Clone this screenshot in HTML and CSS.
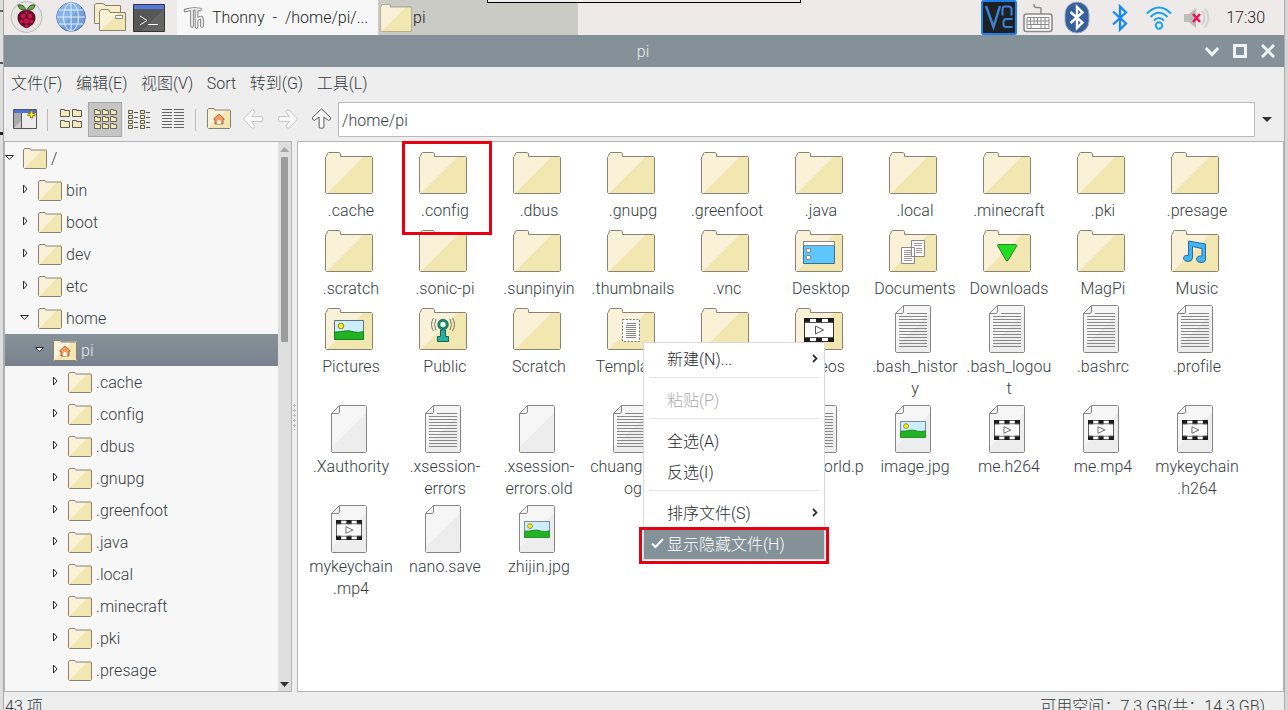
FILE: index.html
```html
<!DOCTYPE html>
<html lang="zh-CN">
<head>
<meta charset="utf-8">
<title>pi</title>
<link rel="stylesheet" href="styles.css">
</head>
<body>
<svg class="defs" aria-hidden="true">
  <defs>
    <clipPath id="fclip"><path d="M.5 8L3 3.5H14.5L16 7.5H46.5L47.500 8.500V43.500L46.500 44.500H1.500L.5 43.500Z"/></clipPath>
  </defs>
  <symbol id="folder" viewBox="0 0 48 48">
    <g clip-path="url(#fclip)"><path fill="#f9f1d8" d="M0 0H48V48H0Z"/><path fill="#f2e6b1" d="M1 45.500L39.500 7H48V45.500Z"/></g>
    <path fill="none" stroke="#888272" d="M1.500 44.500L.5 43.500V8L1.600 7 2.500 4.200 3.500 3.500H14.200L15.500 4.500V7.500H46.500L47.500 8.500V43.500L46.500 44.500Z"/>
  </symbol>
  <symbol id="folder-s" viewBox="0 0 24 24">
    <path fill="#f9f1d8" d="M.5 2.500L1.500 1H7L8 2.500H23.500V21.500H.5Z"/><path fill="#f2e6b1" d="M1 21.500L19.500 3H23.500V21.500Z"/>
    <path fill="none" stroke="#888272" d="M.5 20.500V3L1.500 1.500H7L7.700 2.500V3H22.500L23.500 3.500V20.500L22.500 21.500H1.500Z"/>
  </symbol>
  <symbol id="house" viewBox="0 0 12 12"><path fill="#ff9a5c" stroke="#7d5a48" stroke-width=".8" d="M.6 6L5.900 1 11.300 6 10 6.400V11H2V6.400Z"/><path fill="#fff" d="M4.200 11V8Q6 6 7.800 8V11Z"/></symbol>
  <symbol id="file" viewBox="0 0 48 48">
    <path fill="#f6f6f6" d="M15 .5H41.500V47.500H6.500V9Z"/><path fill="#ededed" d="M7 42L41 8V47H7Z"/>
    <path fill="none" stroke="#858585" d="M14.500 .5H40.500L41.500 1.500V46.500L40.500 47.500H7.500L6.500 46.500V8.500ZM14.500 .5V7L13.500 8.500H6.500"/>
  </symbol>
  <symbol id="text" viewBox="0 0 48 48"><use href="#file"/><path stroke="#888" d="M18 8.500H38M10 11.500H38M10 14.500H38M10 17.500H38M10 20.500H38M10 23.500H38M10 26.500H38M10 29.500H38M10 32.500H38M10 35.500H38M10 38.500H38M10 41.500H38"/></symbol>
  <symbol id="pic" viewBox="0 0 30 20" preserveAspectRatio="none"><path fill="#cdeefc" d="M.5.5H29.500V19.500H.5Z"/><path fill="#21b321" stroke="#17801b" d="M.5 12Q7 12 11 11 15 10 20 12 25 13 29.500 11.500V19.500H.5Z"/><path fill="none" stroke="#60727a" d="M.5 12V.5H29.500V12"/><circle cx="7" cy="6" r="2.800" fill="#ffee1c" stroke="#8d8617"/></symbol>
  <symbol id="film" viewBox="0 0 30 24" preserveAspectRatio="none"><rect x=".5" y=".5" width="29" height="23" rx="1" fill="#fff" stroke="#333"/><path fill="#1c1c1c" d="M0 0H6V5H0ZM12 0H18V5H12ZM24 0H30V5H24ZM0 19H6V24H0ZM12 19H18V24H12ZM24 19H30V24H24Z"/><path fill="none" stroke="#555" d="M1 4.500H29M1 19.500H29M11.500 8V16L19.500 12Z"/></symbol>
  <symbol id="image" viewBox="0 0 48 48"><use href="#file"/><use href="#pic" x="11" y="16" width="26" height="17"/></symbol>
  <symbol id="video" viewBox="0 0 48 48"><use href="#file"/><use href="#film" x="11" y="15" width="26" height="20"/></symbol>
  <symbol id="f-home" viewBox="0 0 24 24"><use href="#folder-s"/><use href="#house" x="6" y="6" width="12" height="12"/></symbol>
  <symbol id="f-desktop" viewBox="0 0 48 48"><use href="#folder"/><path fill="#5dc7fd" stroke="#386f8f" d="M8.500 14.500H39.500V36.500H8.500Z"/><path fill="#fff" stroke="#888" d="M8.500 14.500H39.500V18.500H8.500ZM11.500 21.500H15.500V25.500H11.500ZM11.500 28.500H15.500V32.500H11.500Z"/></symbol>
  <symbol id="f-docs" viewBox="0 0 48 48"><use href="#folder"/><path fill="#fff" stroke="#888" d="M22.500 13.500H35.500V29.500H22.500ZM12.500 20.500H25.500V36.500H12.500Z"/><path stroke="#999" d="M25 16.500H33M25 18.500H33M27 21.500H33M27 23.500H33M27 25.500H33M15 23.500H23M15 25.500H23M15 27.500H23M15 29.500H23M15 31.500H23M15 33.500H23"/></symbol>
  <symbol id="f-down" viewBox="0 0 48 48"><use href="#folder"/><path fill="#20de20" stroke="#3d7a32" d="M15 17.500H33L34 18.500 25 33.500 23.500 34 14.500 18.500Z"/></symbol>
  <symbol id="f-music" viewBox="0 0 48 48"><use href="#folder"/><path fill="#43b4fb" stroke="#2c6a96" d="M17.500 14L34.500 17V33Q34 35.500 30 35.500 25.500 35 25.500 32 26 28.500 31 29V21.500L21.500 19.500V31Q21 34.500 17 34.500 12.500 34 12.500 31 13 27.500 17.500 28.500Z"/></symbol>
  <symbol id="f-pics" viewBox="0 0 48 48"><use href="#folder"/><use href="#pic" x="9" y="15" width="30" height="20"/></symbol>
  <symbol id="f-video" viewBox="0 0 48 48"><use href="#folder"/><use href="#film" x="9" y="13" width="30" height="24"/></symbol>
  <symbol id="f-tmpl" viewBox="0 0 48 48"><use href="#folder"/><path fill="#fff" stroke="#777" stroke-dasharray="2 1.500" d="M15.500 14.500H32.500V36.500H15.500Z"/><path stroke="#888" d="M20 18.500H29M19 20.500H29M19 22.500H29M19 24.500H29M19 26.500H29M19 28.500H29M19 30.500H29M19 32.500H29"/></symbol>
  <symbol id="f-public" viewBox="0 0 48 48"><use href="#folder"/><path fill="#22b3a4" stroke="#1b5f5a" d="M21.500 25H26.500V31.500H29.500V36.500H18.500V31.500H21.500Z"/><circle cx="24" cy="19.500" r="4.200" fill="#e9f4fb" stroke="#1c8268" stroke-width="3"/><path fill="none" stroke="#6f7c68" d="M17 14Q14 19.500 17 25M14.500 13Q10.500 19.500 14.500 26M31 14Q34 19.500 31 25M33.500 13Q37.500 19.500 33.500 26"/></symbol>
  <symbol id="exp-r" viewBox="0 0 12 12"><path fill="#fff" stroke="#2a2a2a" d="M4.500 2L8 6 4.500 10Z"/></symbol>
  <symbol id="exp-d" viewBox="0 0 12 12"><path fill="#fff" stroke="#2a2a2a" d="M1.500 4.500H9.500L5.500 8.300Z"/></symbol>
  <symbol id="mini" viewBox="0 0 10 8"><path fill="#f4e9bc" stroke="#625c4b" d="M.5 7.500V.5H4.500V1.500H9.500V7.500Z"/></symbol>
  <symbol id="mini3" viewBox="0 0 7 6"><path fill="#f4e9bc" stroke="#6a6450" d="M.5 5.500V.5H3.500V1.500H6.500V5.500Z"/></symbol>
  <symbol id="arrow" viewBox="0 0 24 24"><path fill="#fafafa" stroke-linejoin="round" d="M1.500 12L10.500 2.500Q13 2 13.500 4.500L10 9.500H21Q22.500 12 21 14.500H10L13.500 19.500Q13 22 10.500 21.500Z"/></symbol>
</svg>

<div class="screen">
  <div class="behind"><i></i><b></b><u></u></div>
  <div class="desktop">
    <header class="taskbar">
      <div class="launchers">
        <svg class="rasp" width="33" height="34" viewBox="0 0 33 34"><circle cx="16.500" cy="17" r="15.500" fill="#e6e6e6" stroke="#bbb"/><g fill="#6aa544" stroke="#2d3f1d" stroke-width=".8"><path d="M16 10Q9 11 8 5 14 4 16 10Z"/><path d="M17 10Q24 11 25 5 19 4 17 10Z"/></g><path fill="#5e0e26" d="M16.500 10Q25 10 25.500 18 25 24 20 26.500 16.500 30 13 26.500 8 24 7.500 18 8 10 16.500 10Z"/><g fill="#c4164c"><circle cx="13" cy="16" r="2.500"/><circle cx="20" cy="16" r="2.500"/><circle cx="16.500" cy="21" r="2.800"/><circle cx="11.500" cy="21.500" r="1.900"/><circle cx="21.500" cy="21.500" r="1.900"/><circle cx="16.500" cy="26" r="1.800"/><circle cx="16.500" cy="12.500" r="1.500"/></g></svg>
        <svg class="globe" width="30" height="30" viewBox="0 0 30 30"><circle cx="15" cy="15" r="14.300" fill="#74a2dc" stroke="#50719c"/><path fill="#86b3ea" d="M5 25A14 14 0 0 1 25 5Z"/><path fill="none" stroke="#e8f0fa" d="M15 1V29M1 15H29M3 8H27M3 22H27"/><ellipse cx="15" cy="15" rx="7.500" ry="14" fill="none" stroke="#e8f0fa"/></svg>
        <svg class="fm" width="32" height="28" viewBox="0 0 32 28"><path fill="#f7edc9" stroke="#888272" d="M.5 20.500V2L2 .5H9.500L11 2.500H26.500V20.500Z"/><path fill="#f9f1d8" stroke="#888272" d="M5.500 27.500V8.500L7 6.500H14.500L16 9.500H31.500V27.500Z"/><path fill="#f2e6b1" d="M7 27L25 10H31V27Z"/><path fill="#fff" stroke="#888" d="M21.500 12.500H28.500V15.500H21.500Z"/></svg>
        <svg class="term" width="32" height="28" viewBox="0 0 32 28"><path fill="#565656" stroke="#333" d="M.5.5H31.500V27.500H.5Z"/><path fill="#646464" d="M8 27L30 6H31V27Z"/><path fill="#5577e0" d="M1 1H31V5H1Z"/><path fill="none" stroke="#fff" d="M7 12L14 16.500 7 21M15 20.500H25"/></svg>
      </div>
      <div class="task thonny"><svg width="22" height="24" viewBox="0 0 22 24"><g fill="none" stroke-linecap="round" stroke-linejoin="round"><path stroke="#777" stroke-width="3.600" d="M2.500 4.500Q9 2 17 3.500M9 4V20M13.500 4V21M13.500 14Q19 9 19 14V20"/><path stroke="#f2f2f2" stroke-width="1.800" d="M2.500 4.500Q9 2 17 3.500M9 4V20M13.500 4V21M13.500 14Q19 9 19 14V20"/></g></svg><span>Thonny - /home/pi/...</span></div>
      <div class="task active"><svg width="32" height="28" viewBox="0 3 48 42" preserveAspectRatio="none"><use href="#folder" width="48" height="48"/></svg><span>pi</span></div>
      <div class="tray">
        <svg width="36" height="35" viewBox="0 0 36 35"><rect x="1" y="1" width="34" height="33" rx="1.500" fill="#1d2125" stroke="#2080e8" stroke-width="2"/><g fill="none" stroke="#3d83d5" stroke-width="2"><path d="M5 6L12.500 27 19 6" stroke-width="2.400"/><path d="M21.500 15.500V9Q21.500 6.500 24 6.500H27.500Q30.500 6.500 30.500 9V15.500M31.500 19H25.500Q22.500 19 22.500 22V24.500Q22.500 27 25.500 27H31.500"/></g></svg>
        <svg class="kbd" width="30" height="30" viewBox="0 0 30 30"><g fill="none" stroke="#8a8a8a"><rect x="1" y="11" width="28" height="17.500" rx="2.500" fill="#fbfbfb" stroke-width="1.600"/><path stroke-width="1.500" d="M18 11V6Q18 4.500 16 4.500H13Q11 4.500 11 1"/><path d="M4 14.500H26V25.500H4ZM4 18H26M4 21.500H26M7.500 14.500V21.500M11 14.500V21.500M14.500 14.500V21.500M18 14.500V21.500M22 14.500V25.500M8 21.500V25.500M18 21.500V25.500"/></g></svg>
        <svg class="bt1" width="30" height="34" viewBox="0 0 30 34"><rect x="3" y="1" width="24" height="31" rx="12" fill="#365f9c" stroke="#9eb0cb"/><path fill="none" stroke="#fff" stroke-width="2.400" d="M8.500 11L20.500 21.500 15 27V6L20.500 11.500 8.500 22"/></svg>
        <svg class="bt2" width="18" height="28" viewBox="0 0 18 28"><path fill="none" stroke="#1389f8" stroke-width="2.300" d="M2 7.500L15 19.500 9 25.500V2.500L15 8.500 2 20.500"/></svg>
        <svg class="wifi" width="26" height="26" viewBox="0 0 26 26"><g fill="none" stroke="#1aa1ee" stroke-width="2"><circle cx="13" cy="20.500" r="3.200"/><path d="M1 8.500Q13-3.500 25 8.500M4.500 12Q13 3.500 21.500 12M8 15.500Q13 10.500 18 15.500"/></g></svg>
        <svg class="vol" width="28" height="22" viewBox="0 0 28 22"><path fill="#bcbcbc" d="M1 7H6L13 1V21L6 15H1Z"/><path fill="none" stroke="#d2d2d2" stroke-width="2" d="M19 4Q24 11 19 18M22 1.500Q29 11 22 20.500"/><path stroke="#f2105a" stroke-width="2.500" d="M10 7L17 15M17 7L10 15"/></svg>
        <span class="clock">17:30</span>
      </div>
      <div class="notch"></div>
    </header>

    <div class="titlebar"><span>pi</span>
      <div class="controls">
        <svg width="14" height="14" viewBox="0 0 14 14"><path d="M.8 4L7 10.500 13.200 4"/></svg>
        <svg width="14" height="14" viewBox="0 0 14 14"><path d="M1.500 1.500H12.500V12.500H1.500Z"/></svg>
        <svg width="14" height="14" viewBox="0 0 14 14"><path d="M1 1L13 13M13 1L1 13"/></svg>
      </div>
    </div>

    <nav class="menubar"><span>文件(F)</span><span>编辑(E)</span><span>视图(V)</span><span>Sort</span><span>转到(G)</span><span>工具(L)</span></nav>

    <div class="toolbar">
      <div class="tools">
        <svg class="t-new" width="24" height="20" viewBox="0 0 24 20"><path fill="#ececec" stroke="#555" d="M.5.5H23.500V19.500H.5Z"/><path fill="#aaa" d="M1 4H8V19H1Z"/><path fill="#ccc" d="M1 19L8 12V19Z"/><path stroke="#555" d="M8.500 4V19"/><path fill="#4b73dd" d="M1 1H23V4H1Z"/><path fill="#ffe81c" stroke="#766d12" stroke-width=".8" d="M17.500 2H19.700V4.500H22V6.700H19.700V9H17.500V6.700H15V4.500H17.500Z"/></svg>
        <i class="sep s1"></i>
        <svg class="t-icons" width="22" height="20" viewBox="0 0 22 20"><use href="#mini" x="0" y="0" width="10" height="8"/><use href="#mini" x="12" y="0" width="10" height="8"/><use href="#mini" x="0" y="11" width="10" height="8"/><use href="#mini" x="12" y="11" width="10" height="8"/></svg>
        <span class="pressed"><svg width="23" height="20" viewBox="0 0 23 20"><use href="#mini3" x="0" y="0" width="7" height="6"/><use href="#mini3" x="8" y="0" width="7" height="6"/><use href="#mini3" x="16" y="0" width="7" height="6"/><use href="#mini3" x="0" y="7" width="7" height="6"/><use href="#mini3" x="8" y="7" width="7" height="6"/><use href="#mini3" x="16" y="7" width="7" height="6"/><use href="#mini3" x="0" y="14" width="7" height="6"/><use href="#mini3" x="8" y="14" width="7" height="6"/><use href="#mini3" x="16" y="14" width="7" height="6"/></svg></span>
        <svg class="t-compact" width="24" height="20" viewBox="0 0 24 20"><path fill="#f4e9bc" stroke="#5f5a4b" d="M.5 1.500H4.500V4.500H.5ZM.5 6.500H4.500V9.500H.5ZM.5 11.500H4.500V14.500H.5ZM.5 16.500H4.500V19.500H.5ZM12.500 1.500H16.500V4.500H12.500ZM12.500 6.500H16.500V9.500H12.500ZM12.500 11.500H16.500V14.500H12.500ZM12.500 16.500H16.500V19.500H12.500Z"/><path stroke="#555" d="M6 3.500H10M6 8.500H10M6 13.500H10M6 18.500H10M18 3.500H22M18 8.500H22M18 13.500H22M18 18.500H22"/></svg>
        <svg class="t-list" width="22" height="20" viewBox="0 0 22 20"><path stroke="#666" d="M0 .5H10M12 .5H22M0 3.500H10M12 3.500H22M0 6.500H10M12 6.500H22M0 9.500H10M12 9.500H22M0 12.500H10M12 12.500H22M0 15.500H10M12 15.500H22M0 18.500H10M12 18.500H22"/></svg>
        <i class="sep s2"></i>
        <svg class="t-home" width="24" height="24"><use href="#f-home"/></svg>
        <svg class="t-back" width="23" height="24" viewBox="0 0 24 24" stroke="#c2c2c2"><use href="#arrow"/></svg>
        <svg class="t-fwd" width="23" height="24" viewBox="0 0 24 24" stroke="#c2c2c2"><use href="#arrow" transform="rotate(180 12 12)"/></svg>
        <svg class="t-up" width="23" height="24" viewBox="0 0 24 24" stroke="#555"><use href="#arrow" transform="rotate(90 12 12)"/></svg>
      </div>
      <div class="path">/home/pi</div>
      <svg class="drop" width="10" height="6" viewBox="0 0 10 6"><path fill="#333" d="M0 0H10L5 5Z"/></svg>
    </div>

    <main class="panes">
      <aside class="side">
        <ul class="tree">
          <li class="l0"><svg class="e"><use href="#exp-d"/></svg><svg class="f"><use href="#folder-s"/></svg><span>/</span></li>
          <li class="l1"><svg class="e"><use href="#exp-r"/></svg><svg class="f"><use href="#folder-s"/></svg><span>bin</span></li>
          <li class="l1"><svg class="e"><use href="#exp-r"/></svg><svg class="f"><use href="#folder-s"/></svg><span>boot</span></li>
          <li class="l1"><svg class="e"><use href="#exp-r"/></svg><svg class="f"><use href="#folder-s"/></svg><span>dev</span></li>
          <li class="l1"><svg class="e"><use href="#exp-r"/></svg><svg class="f"><use href="#folder-s"/></svg><span>etc</span></li>
          <li class="l1"><svg class="e"><use href="#exp-d"/></svg><svg class="f"><use href="#folder-s"/></svg><span>home</span></li>
          <li class="l2 selected"><svg class="e"><use href="#exp-d"/></svg><svg class="f"><use href="#f-home"/></svg><span>pi</span></li>
          <li class="l3"><svg class="e"><use href="#exp-r"/></svg><svg class="f"><use href="#folder-s"/></svg><span>.cache</span></li>
          <li class="l3"><svg class="e"><use href="#exp-r"/></svg><svg class="f"><use href="#folder-s"/></svg><span>.config</span></li>
          <li class="l3"><svg class="e"><use href="#exp-r"/></svg><svg class="f"><use href="#folder-s"/></svg><span>.dbus</span></li>
          <li class="l3"><svg class="e"><use href="#exp-r"/></svg><svg class="f"><use href="#folder-s"/></svg><span>.gnupg</span></li>
          <li class="l3"><svg class="e"><use href="#exp-r"/></svg><svg class="f"><use href="#folder-s"/></svg><span>.greenfoot</span></li>
          <li class="l3"><svg class="e"><use href="#exp-r"/></svg><svg class="f"><use href="#folder-s"/></svg><span>.java</span></li>
          <li class="l3"><svg class="e"><use href="#exp-r"/></svg><svg class="f"><use href="#folder-s"/></svg><span>.local</span></li>
          <li class="l3"><svg class="e"><use href="#exp-r"/></svg><svg class="f"><use href="#folder-s"/></svg><span>.minecraft</span></li>
          <li class="l3"><svg class="e"><use href="#exp-r"/></svg><svg class="f"><use href="#folder-s"/></svg><span>.pki</span></li>
          <li class="l3"><svg class="e"><use href="#exp-r"/></svg><svg class="f"><use href="#folder-s"/></svg><span>.presage</span></li>
        </ul>
        <div class="scroll"><svg width="9" height="5" viewBox="0 0 9 5"><path fill="#a5a5a5" d="M0 5H9L4.500 0Z"/></svg><i></i><svg width="9" height="5" viewBox="0 0 9 5"><path fill="#333" d="M0 0H9L4.500 5Z"/></svg></div>
      </aside>
      <div class="splitter"></div>
      <section class="files">
        <div class="item"><svg><use href="#folder"/></svg>.cache</div>
        <div class="item"><svg><use href="#folder"/></svg>.config</div>
        <div class="item"><svg><use href="#folder"/></svg>.dbus</div>
        <div class="item"><svg><use href="#folder"/></svg>.gnupg</div>
        <div class="item"><svg><use href="#folder"/></svg>.greenfoot</div>
        <div class="item"><svg><use href="#folder"/></svg>.java</div>
        <div class="item"><svg><use href="#folder"/></svg>.local</div>
        <div class="item"><svg><use href="#folder"/></svg>.minecraft</div>
        <div class="item"><svg><use href="#folder"/></svg>.pki</div>
        <div class="item"><svg><use href="#folder"/></svg>.presage</div>
        <div class="item"><svg><use href="#folder"/></svg>.scratch</div>
        <div class="item"><svg><use href="#folder"/></svg>.sonic-pi</div>
        <div class="item"><svg><use href="#folder"/></svg>.sunpinyin</div>
        <div class="item"><svg><use href="#folder"/></svg>.thumbnails</div>
        <div class="item"><svg><use href="#folder"/></svg>.vnc</div>
        <div class="item"><svg><use href="#f-desktop"/></svg>Desktop</div>
        <div class="item"><svg><use href="#f-docs"/></svg>Documents</div>
        <div class="item"><svg><use href="#f-down"/></svg>Downloads</div>
        <div class="item"><svg><use href="#folder"/></svg>MagPi</div>
        <div class="item"><svg><use href="#f-music"/></svg>Music</div>
        <div class="item"><svg><use href="#f-pics"/></svg>Pictures</div>
        <div class="item"><svg><use href="#f-public"/></svg>Public</div>
        <div class="item"><svg><use href="#folder"/></svg>Scratch</div>
        <div class="item"><svg><use href="#f-tmpl"/></svg>Templates</div>
        <div class="item"><svg><use href="#folder"/></svg></div>
        <div class="item"><svg><use href="#f-video"/></svg>Videos</div>
        <div class="item"><svg><use href="#text"/></svg>.bash_histor<br>y</div>
        <div class="item"><svg><use href="#text"/></svg>.bash_logou<br>t</div>
        <div class="item"><svg><use href="#text"/></svg>.bashrc</div>
        <div class="item"><svg><use href="#text"/></svg>.profile</div>
        <div class="item"><svg><use href="#file"/></svg>.Xauthority</div>
        <div class="item"><svg><use href="#text"/></svg>.xsession-<br>errors</div>
        <div class="item"><svg><use href="#file"/></svg>.xsession-<br>errors.old</div>
        <div class="item"><svg><use href="#text"/></svg>chuangkou.l<br>og</div>
        <div class="item"></div>
        <div class="item"><svg><use href="#text"/></svg>helloworld.p<br>y</div>
        <div class="item"><svg><use href="#image"/></svg>image.jpg</div>
        <div class="item"><svg><use href="#video"/></svg>me.h264</div>
        <div class="item"><svg><use href="#video"/></svg>me.mp4</div>
        <div class="item"><svg><use href="#video"/></svg>mykeychain<br>.h264</div>
        <div class="item"><svg><use href="#video"/></svg>mykeychain<br>.mp4</div>
        <div class="item"><svg><use href="#file"/></svg>nano.save</div>
        <div class="item"><svg><use href="#image"/></svg>zhijin.jpg</div>
      </section>
    </main>
    <footer class="status"><span>43 项</span><span>可用空间：7.3 GB(共：14.3 GB)</span></footer>
  </div>
  <div class="edge"></div>

  <div class="popup">
    <div class="mi"><span>新建(N)...</span><svg class="chev" viewBox="0 0 6 9"><path d="M1 1L4.500 4.500 1 8"/></svg></div><hr>
    <div class="mi off"><span>粘贴(P)</span></div><hr>
    <div class="mi"><span>全选(A)</span></div>
    <div class="mi"><span>反选(I)</span></div><hr>
    <div class="mi"><span>排序文件(S)</span><svg class="chev" viewBox="0 0 6 9"><path d="M1 1L4.500 4.500 1 8"/></svg></div>
    <div class="mi on"><svg class="check" viewBox="0 0 13 11"><path d="M1 5.500L4.500 9 12 1"/></svg><span>显示隐藏文件(H)</span></div>
  </div>
  <div class="mark mark-config"></div>
  <div class="mark mark-hidden"></div>
</div>
</body>
</html>
```
FILE: styles.css
```css
* { box-sizing: border-box; }
body { margin: 0; overflow: hidden; }
.defs { position: absolute; width: 0; height: 0; }
svg { display: block; flex: none; }
.screen {
  position: relative; display: flex; width: 1288px; height: 710px; overflow: hidden;
  background: #eeeeee; color: #353b40;
  font: 300 16px/22px Roboto, "Noto Sans CJK SC", sans-serif; letter-spacing: .05px;
}

.behind { width: 4px; background: #dedede; border-right: 1px solid #aaa; display: flex; flex-direction: column; }
.behind i { height: 2px; margin-top: 10px; background: #666; }
.behind b { height: 2px; margin-top: 50px; background: #555; }
.behind u { height: 3px; margin-top: 68px; background: #222; }
.desktop { width: 1280px; display: flex; flex-direction: column; }
.edge { width: 4px; background: #d6d6d6; border-left: 1px solid #aaa; }

.taskbar { position: relative; height: 35px; display: flex; background: #eeeae9; color: #1e1e1e; letter-spacing: 0; }
.launchers { width: 173px; display: flex; }
.rasp { margin-left: 6px; }
.globe { margin: 2px 0 0 13px; }
.fm { margin: 3px 0 0 8px; }
.term { margin: 4px 0 0 7px; }
.task { display: flex; align-items: center; height: 35px; }
.thonny { width: 201px; padding-left: 6px; gap: 7px; background: #f7f7f7; word-spacing: 4px; }
.active { width: 200px; padding-left: 2px; background: #cacbc5; }
.active span { margin-left: 1px; }
.tray { margin-left: auto; display: flex; align-items: center; }
.kbd { margin-left: 6px; }
.bt1 { margin-left: 9px; }
.bt2 { margin-left: 19px; }
.wifi { margin-left: 17px; }
.vol { margin-left: 11px; }
.clock { margin: 0 19px 0 15px; }
.notch { position: absolute; left: 483px; top: 0; width: 314px; height: 3px; background: #eee; border: 1px solid #000; border-top: 0; }

.titlebar { height: 32px; display: grid; grid-template-columns: 1fr auto 1fr; align-items: center; background: #849199; color: #e8ebec; }
.titlebar span { grid-column: 2; padding: 2px 2px 0 0; }
.controls { justify-self: end; display: flex; gap: 14px; margin-right: 9px; }
.controls path { fill: none; stroke: #f2f3f4; stroke-width: 3; }

.menubar { height: 34px; display: flex; align-items: center; gap: 13.600px; padding: 0 7px; letter-spacing: 0; }
.toolbar { height: 40px; display: flex; padding-top: 1px; }
.tools { width: 334px; height: 35px; display: flex; align-items: center; }
.tools > svg { margin-bottom: 1px; }
.t-new { margin-left: 9px; }
.sep { width: 1px; height: 22px; background: #bbb; }
.s1 { margin-left: 10px; }
.t-icons { margin-left: 12px; }
.pressed { width: 34px; height: 35px; margin-left: 6px; padding: 6px 0 0 5px; background: #c5c5c5; border: 1px solid #a8a8a8; }
.t-compact { margin-left: 6px; }
.t-list { margin-left: 10px; }
.s2 { margin-left: 11px; }
.t-home { margin-left: 11px; }
.t-back { margin-left: 10.500px; }
.t-fwd { margin-left: 11px; }
.t-up { margin-left: 11px; }
.path { width: 917px; height: 35px; padding: 7px 3px; background: #fff; border: 1px solid #bbb; border-radius: 1px; }
.drop { margin: 15px 0 0 7px; }

.panes { height: 551px; display: flex; }
.side { width: 288px; display: flex; background: #f7f7f7; border: 1px solid #b4b4b4; }
.tree { width: 273px; margin: 0; padding: 0; list-style: none; overflow: hidden; }
.tree li { height: 32px; display: flex; align-items: center; }
.tree span { padding-top: 2px; }
.tree .e { width: 12px; height: 12px; margin: 0 1px 2px -1px; }
.tree .f { width: 24px; height: 24px; margin: 2px 4px 0 6px; }
.l0 { padding-left: 0; }
.l1 { padding-left: 15px; }
.l2 { padding-left: 30px; }
.l3 { padding-left: 45px; }
.selected { background: linear-gradient(#869299, #79818f); color: #e6e8ea; }
.scroll { width: 13px; display: flex; flex-direction: column; align-items: center; background: #dedede; padding: 5px 0 4px; }
.scroll i { width: 7px; height: 185px; margin: 5px 0 auto; background: #9d9d9d; border-radius: 1px; }
.splitter { width: 5px; background: radial-gradient(circle, #bbb 1px, transparent 1.200px) 0 262px / 5px 5px repeat-y; clip-path: inset(262px 0 262px 0); }
.files {
  width: 987px; display: grid; grid-template-columns: repeat(10, 94px); grid-template-rows: 78px 78px 100px 100px 100px;
  align-content: start; padding: 7px 0 0 6px; background: #fff; border: 1px solid #b4b4b4;
}
.item { text-align: center; white-space: nowrap; }
.item svg { width: 48px; height: 48px; margin: 0 0 3px 21px; }
.status { height: 18px; display: flex; justify-content: space-between; padding: 4px 19px 0 1px; white-space: nowrap; overflow: hidden; }

.popup { position: absolute; left: 643px; top: 342px; width: 182px; height: 218px; background: #fff; border: 1px solid #d9d9d9; letter-spacing: 0; }
.mi { height: 31px; display: flex; align-items: center; padding: 0 6px 0 23px; color: #25292c; }
.mi span { padding-top: 2px; }
.popup hr { height: 1px; margin: 3px 5px 6px; border: 0; background: #e3e3e3; }
.chev { width: 6px; height: 9px; margin-left: auto; }
.chev path { fill: none; stroke: #333; stroke-width: 1.800; }
.mi.off { color: #aaa; }
.mi.on { background: #849199; color: #fff; padding-left: 7px; }
.check { width: 13px; height: 11px; margin-right: 3px; }
.check path { fill: none; stroke: #fff; stroke-width: 2; }
.mark { position: absolute; border: 3px solid #e60012; }
.mark-config { left: 402px; top: 141px; width: 90px; height: 94px; }
.mark-hidden { left: 639px; top: 527px; width: 190px; height: 37px; }
```
